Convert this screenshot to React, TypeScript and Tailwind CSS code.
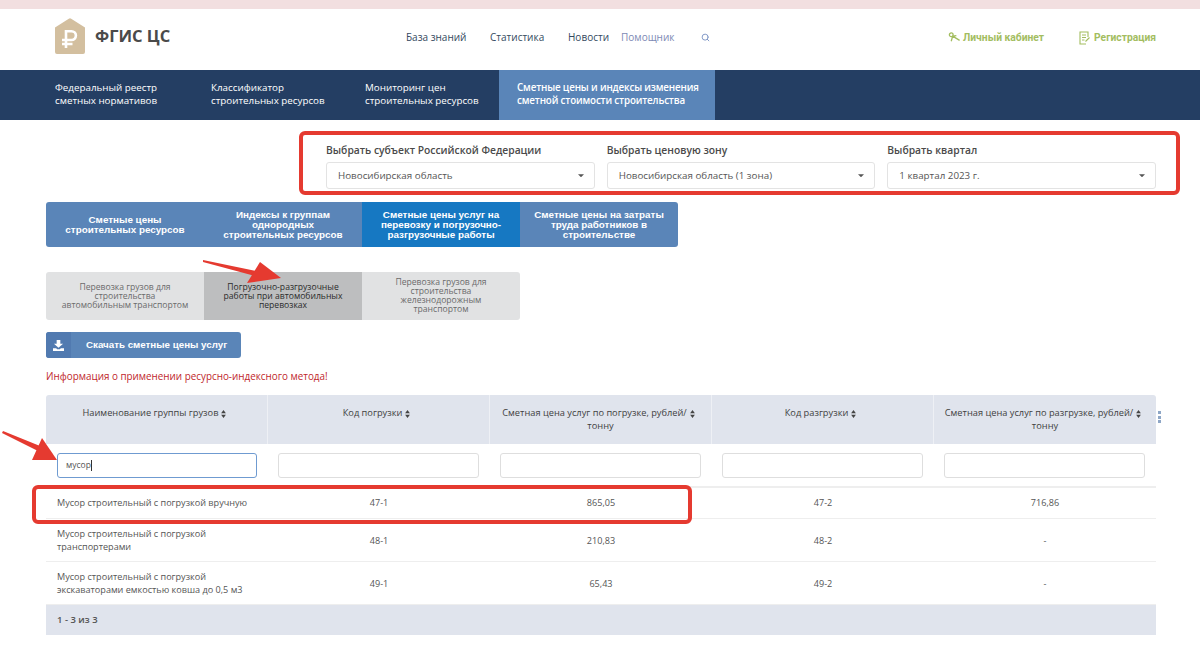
import { Search } from 'lucide-react';

const openSans = 'font-["Open_Sans",sans-serif]';

const navItems = [
  ['Федеральный реестр', 'сметных нормативов', 'w-[156px] pl-[55px]'],
  ['Классификатор', 'строительных ресурсов', 'w-[154px]'],
  ['Мониторинг цен', 'строительных ресурсов', 'w-[135px]'],
];

const mainTabs = [
  { lines: ['Сметные цены', 'строительных ресурсов'], active: false },
  { lines: ['Индексы к группам', 'однородных', 'строительных ресурсов'], active: false },
  { lines: ['Сметные цены услуг на', 'перевозку и погрузочно-', 'разгрузочные работы'], active: true },
  { lines: ['Сметные цены на затраты', 'труда работников в', 'строительстве'], active: false },
];

const subTabs = [
  { lines: ['Перевозка грузов для', 'строительства', 'автомобильным транспортом'], active: false },
  { lines: ['Погрузочно-разгрузочные', 'работы при автомобильных', 'перевозках'], active: true },
  { lines: ['Перевозка грузов для', 'строительства', 'железнодорожным', 'транспортом'], active: false },
];

const selects = [
  ['Выбрать субъект Российской Федерации', 'Новосибирская область'],
  ['Выбрать ценовую зону', 'Новосибирская область (1 зона)'],
  ['Выбрать квартал', '1 квартал 2023 г.'],
];

const headers = [
  ['Наименование группы грузов'],
  ['Код погрузки'],
  ['Сметная цена услуг по погрузке, рублей/', 'тонну'],
  ['Код разгрузки'],
  ['Сметная цена услуг по разгрузке, рублей/', 'тонну'],
];

const rows = [
  { name: ['Мусор строительный с погрузкой вручную'], cells: ['47-1', '865,05', '47-2', '716,86'], h: 'h-[31px] pb-[2px]' },
  { name: ['Мусор строительный с погрузкой', 'транспортерами'], cells: ['48-1', '210,83', '48-2', '-'], h: 'h-[43px]' },
  { name: ['Мусор строительный с погрузкой', 'экскаваторами емкостью ковша до 0,5 м3'], cells: ['49-1', '65,43', '49-2', '-'], h: 'h-[43px]' },
];

const SortIcon = () => (
  <svg viewBox="0 0 6 10" className="ml-[3px] inline-block h-[8px] w-[5px] fill-[#444]">
    <path d="M3 0 6 4H0zM3 10 0 6h6z" />
  </svg>
);

const Caret = () => (
  <svg viewBox="0 0 8 4" className="mb-[2px] h-[3.5px] w-[6px] fill-[#555]">
    <path d="M0 0h8L4 4z" />
  </svg>
);

const Logo = () => (
  <svg viewBox="0 0 30 36" className="h-[36px] w-[30px]">
    <path d="M13.8.8a2 2 0 0 1 2.4 0L30 9.5V34a2 2 0 0 1-2 2H2a2 2 0 0 1-2-2V9.5z" fill="#d3bf9f" />
    <path d="M11 30V13.2h5.5a4.4 4.4 0 0 1 0 8.8H7M7 26h10.5" fill="none" stroke="#fff" strokeWidth="2.6" />
  </svg>
);

const PinIcon = () => (
  <svg viewBox="0 0 14 14" className="h-[13px] w-[13px]" fill="none" stroke="#a3bd5f" strokeWidth="1.4">
    <circle cx="3.5" cy="3" r="2" />
    <path d="M5 4.5 3.5 10M5 4.5 12.5 9M9 4 5 4.5" />
  </svg>
);

const FormIcon = () => (
  <svg viewBox="0 0 12 14" className="h-[14px] w-[12px]" fill="none" stroke="#a3bd5f" strokeWidth="1.1">
    <path d="M9 6V1H1v12h6M3 4h4M3 6.5h4M3 9h2.5M6.5 10.5 10.5 6.5" />
  </svg>
);

const DownloadIcon = () => (
  <svg viewBox="0 0 12 12" className="h-[11px] w-[11px] fill-white">
    <path d="M4 0h4v4h3L6 8.5 1 4h3zM0 9h3.5l1 1h3l1-1H12v3H0z" />
  </svg>
);

export default function App() {
  return (
    <div className={`relative h-[645px] w-[1200px] overflow-hidden bg-white ${openSans}`}>
      <div className="h-[9px] bg-[#f2dfe0]" />

      {/* шапка */}
      <header className="flex h-[61px] items-center pb-[5px]">
        <div className="mb-[2px] ml-[55px] flex w-[351px] items-center gap-[10px]">
          <Logo />
          <span className="text-[16.5px] font-bold text-[#4a4a4a]">ФГИС ЦС</span>
        </div>
        <nav className="flex items-center text-[10px] text-[#34495e]">
          <span className="w-[84px]">База знаний</span>
          <span className="w-[78px]">Статистика</span>
          <span className="w-[53px]">Новости</span>
          <span className="w-[80px] text-[#7d8ab5]">Помощник</span>
          <Search size={9} strokeWidth={2.5} className="text-[#7d94c4]" />
        </nav>
        <div className="ml-[238px] mt-[2px] flex items-center font-['Roboto',sans-serif] text-[10.3px] font-bold text-[#a3bd5f]">
          <PinIcon />
          <span className="ml-[2px] w-[116px]">Личный кабинет</span>
          <FormIcon />
          <span className="ml-[3px]">Регистрация</span>
        </div>
      </header>

      {/* главное меню */}
      <div className="flex h-[50px] bg-[#243e63] text-[9.8px] leading-[13.5px] text-white">
        {navItems.map(([a, b, w]) => (
          <div key={a} className={`flex flex-col justify-center box-content pb-[2px] h-[48px] ${w}`}>
            <span>{a}</span>
            <span>{b}</span>
          </div>
        ))}
        <div className="ml-[-1px] flex w-[216px] flex-col justify-center bg-[#5a85b8] pb-[2px] pl-[18px] font-semibold tracking-[-0.15px]">
          <span>Сметные цены и индексы изменения</span>
          <span>сметной стоимости строительства</span>
        </div>
      </div>

      {/* фильтры */}
      <div className="ml-[326px] mt-[23px] flex w-[830px] gap-3">
        {selects.map(([label, value]) => (
          <div key={label} className="w-[268.67px]">
            <div className="mb-[5px] h-[14px] text-[10.3px] leading-[14px] font-semibold text-[#4a4a4a]">{label}</div>
            <div className="flex h-[27px] items-center justify-between rounded-[3px] border border-[#e3e3e3] pl-[11px] pr-[10px] pt-[2px] text-[9.8px] text-[#555]">
              <span>{value}</span>
              <Caret />
            </div>
          </div>
        ))}
      </div>

      {/* вкладки */}
      <div className="ml-[46px] mt-[13px] flex h-[45px] w-[632px] overflow-hidden rounded-[3px] bg-[#5a85b8] font-['Liberation_Sans',sans-serif] text-[9.85px] leading-[10px] font-bold text-white">
        {mainTabs.map((tab) => (
          <div key={tab.lines[0]} className={`flex w-[158px] flex-col items-center justify-center ${tab.active ? 'bg-[#1678c2]' : ''}`}>
            {tab.lines.map((l) => <span key={l}>{l}</span>)}
          </div>
        ))}
      </div>

      <div className="ml-[46px] mt-[25px] flex h-[48px] w-[474px] overflow-hidden rounded-[3px] bg-[#e1e2e3] text-[8.6px] leading-[9px] text-[#6b6b6b]">
        {subTabs.map((tab) => (
          <div key={tab.lines[0]} className={`flex w-[158px] flex-col items-center justify-center ${tab.active ? 'bg-[#bdbebf] text-[#2b2b2b]' : ''}`}>
            {tab.lines.map((l) => <span key={l}>{l}</span>)}
          </div>
        ))}
      </div>

      <button className="ml-[46px] mt-[12px] flex h-[26px] w-[195px] overflow-hidden rounded-[3px] bg-[#5a85b8] font-['Liberation_Sans',sans-serif] text-[9.75px] font-bold text-white">
        <span className="flex h-full w-[25px] items-center justify-center bg-[#517ab0]">
          <DownloadIcon />
        </span>
        <span className="ml-[15px] self-center">Скачать сметные цены услуг</span>
      </button>

      <div className="ml-[46px] mt-[11px] h-[14px] text-[9.87px] leading-[14px] text-[#c0262c]">
        Информация о применении ресурсно-индексного метода!
      </div>

      {/* таблица */}
      <div className="ml-[46px] mt-[12px] w-[1110px] text-[9.1px] text-[#555]">
        <div className="grid h-[49px] grid-cols-5 rounded-t-[3px] bg-[#e0e4ed] text-[9.25px] leading-[13px] text-[#3f3f3f]">
          {headers.map((h, i) => (
            <div key={h[0]} className={`flex flex-col items-center pt-[11px] ${i < 4 ? 'border-r border-[#eef0f5]' : ''}`}>
              <span className="mr-[4px] whitespace-nowrap">{h[0]}<SortIcon /></span>
              {h[1] && <span>{h[1]}</span>}
            </div>
          ))}
        </div>
        <div className="grid h-[44px] grid-cols-5 items-center border-b-2 border-[#eeeeee]">
          {headers.map((h, i) => (
            <div key={h[0]} className="flex justify-center">
              {i === 0 ? (
                <div className="flex h-[25px] w-[200px] items-center rounded-[3px] border border-[#6f9bd1] pl-2 text-[8.5px] text-[#555]">
                  мусор<span className="h-[11px] w-px bg-[#333]" />
                </div>
              ) : (
                <div className="mr-[1px] h-[25px] w-[201px] rounded-[3px] border border-[#dedede]" />
              )}
            </div>
          ))}
        </div>
        {rows.map((r) => (
          <div key={r.cells[0]} className={`grid grid-cols-5 items-center border-b border-[#eeeeee] leading-[13px] ${r.h}`}>
            <div className="pl-[11px] leading-[13px]">
              {r.name.map((l) => <div key={l} className="whitespace-nowrap">{l}</div>)}
            </div>
            {r.cells.map((c, i) => (
              <div key={i} className="text-center">{c}</div>
            ))}
          </div>
        ))}
        <div className="flex h-[30px] items-center bg-[#e0e4ed] pl-[11px] text-[9.5px] font-semibold text-[#555]">1 - 3 из 3</div>
      </div>

      {/* три точки справа от таблицы */}
      <div className="absolute left-[1158px] top-[411px] flex flex-col gap-[1.5px]">
        <span className="h-[3px] w-[3px] bg-[#8ea6c6]" />
        <span className="h-[3px] w-[3px] bg-[#8ea6c6]" />
        <span className="h-[3px] w-[3px] bg-[#8ea6c6]" />
      </div>

      {/* красные пометки поверх скриншота */}
      <div className="absolute left-[299px] top-[131px] h-[64px] w-[881px] rounded-[6px] border-4 border-[#e53a30]" />
      <div className="absolute left-[32px] top-[485px] h-[39px] w-[660px] rounded-[6px] border-4 border-[#e53a30]" />
      <svg className="absolute left-0 top-0 h-[645px] w-[1200px]" viewBox="0 0 1200 645">
        <path d="M203 260 203 262 255 276 256 271z" fill="#e53a30" />
        <path d="M260 262 281 278 247 283z" fill="#e53a30" />
        <path d="M3 431 2 433 42 453 45 448z" fill="#e53a30" />
        <path d="M42 438 57 460 32 460z" fill="#e53a30" />
      </svg>
    </div>
  );
}
